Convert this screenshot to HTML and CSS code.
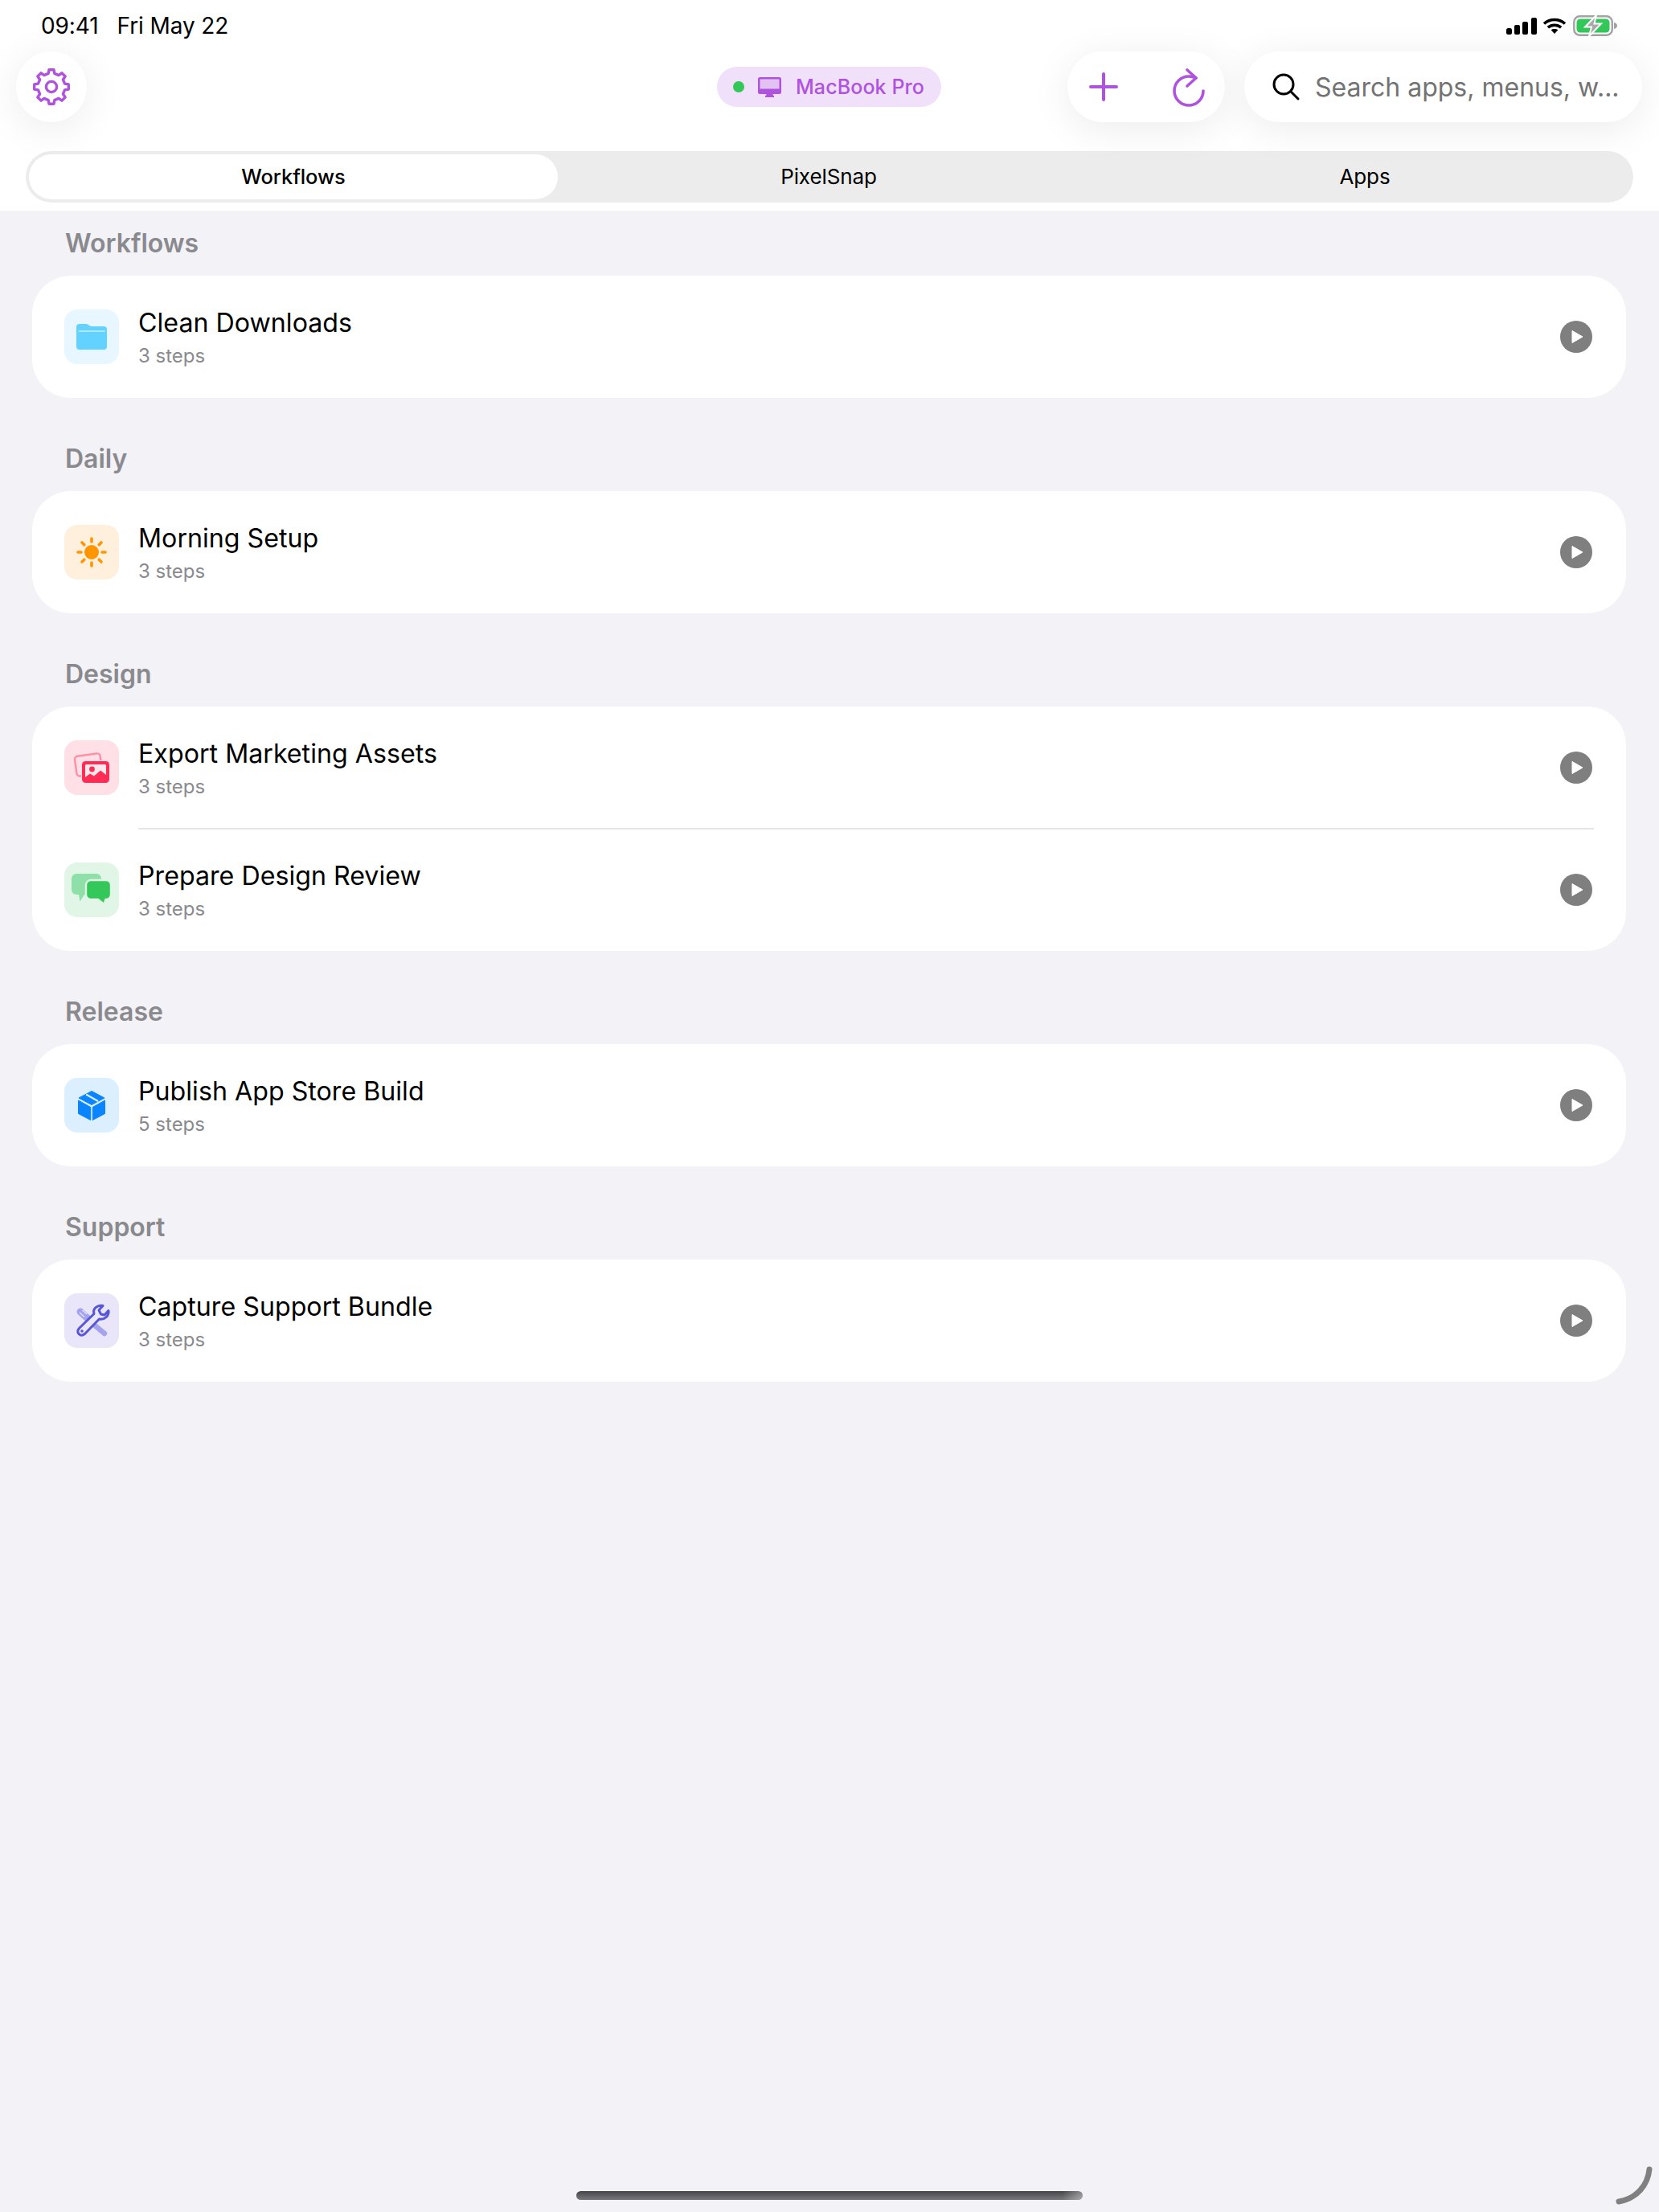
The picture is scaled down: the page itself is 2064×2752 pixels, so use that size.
FILE: index.html
```html
<!DOCTYPE html>
<html lang="en">
<head>
  <meta charset="UTF-8">
  <title>Workflows</title>
  <link rel="stylesheet" href="styles.css">
</head>
<body>

<header class="top">
  <div class="status">
    <div class="clock"><span>09:41</span><span>Fri May 22</span></div>
    <div class="status-icons">
      <svg class="ic-signal" width="38" height="21" viewBox="0 0 38 21">
        <rect x="0" y="13" width="7" height="8" rx="2.5"/>
        <rect x="10" y="9" width="7" height="12" rx="2"/>
        <rect x="20" y="5" width="7" height="16" rx="2"/>
        <rect x="31" y="0" width="7" height="21" rx="2"/>
      </svg>
      <svg class="ic-wifi" width="30" height="20" viewBox="0 0 30 20">
        <path d="M2 7.5C9.500 .8 20.500 .8 28 7.500M6.800 12.200C11.500 8.200 18.500 8.200 23.200 12.200" fill="none" stroke="#000" stroke-width="3.600"/>
        <path d="M10.600 15.300C13 13.500 17 13.500 19.400 15.300L15 20Z"/>
      </svg>
      <svg class="ic-battery" width="56" height="26" viewBox="0 0 56 26">
        <rect x="1.300" y="1.300" width="47.500" height="23.400" rx="7" fill="#fff" stroke="#a3a3a3" stroke-width="2.400"/>
        <rect x="4.500" y="4.500" width="41" height="17" rx="4.500" fill="#34c759"/>
        <path d="M51 9c2.500 .6 4 2 4 4s-1.500 3.400-4 4z" fill="#a3a3a3"/>
        <path d="M29 0L15 14.500H23L20 26L35 10.500H26.500Z" fill="#a9a9a9" stroke="#fff" stroke-width="2"/>
      </svg>
    </div>
  </div>

  <div class="toolbar">
    <div class="toolbar-left">
      <button class="round-btn">
        <svg width="48" height="48" viewBox="-24 -24 48 48" fill="none" stroke="#af52de" stroke-width="3.400" stroke-linejoin="round">
          <path d="M-2.990 -21.290L2.990 -21.290L3.820 -16.560L9.010 -14.420L12.940 -17.170L17.170 -12.940L14.420 -9.010L16.560 -3.820L21.290 -2.990L21.290 2.990L16.560 3.820L14.420 9.010L17.170 12.940L12.940 17.170L9.010 14.420L3.820 16.560L2.990 21.290L-2.990 21.290L-3.820 16.560L-9.010 14.420L-12.940 17.170L-17.170 12.940L-14.420 9.010L-16.560 3.820L-21.290 2.990L-21.290 -2.990L-16.560 -3.820L-14.420 -9.010L-17.170 -12.940L-12.940 -17.170L-9.010 -14.420L-3.820 -16.560Z"/>
          <circle r="6.600"/>
        </svg>
      </button>
    </div>

    <div class="device">
      <span class="device-dot"></span>
      <svg width="29" height="25" viewBox="0 0 29 25">
        <rect width="29" height="21" rx="2.500" fill="#af52de"/>
        <rect x="2.500" y="2.500" width="24" height="12" fill="#e2c2f3"/>
        <path d="M10.500 21H18.500L19 23H20V25H9V23H10Z" fill="#af52de"/>
      </svg>
      <span class="device-name">MacBook Pro</span>
    </div>

    <div class="toolbar-right">
      <div class="actions">
        <button class="action-btn">
          <svg width="40" height="40" viewBox="0 0 40 40" fill="none" stroke="#af52de" stroke-width="4" stroke-linecap="round">
            <path d="M20 4V36M4 20H36"/>
          </svg>
        </button>
        <button class="action-btn reload">
          <svg width="44" height="52" viewBox="0 0 44 52" fill="none" stroke="#af52de" stroke-width="3.600" stroke-linecap="round" stroke-linejoin="round">
            <path d="M31 13C28 11.700 25 11 22 11A18 18 0 1 0 40 29"/>
            <path d="M20 3L31 13L20 23"/>
          </svg>
        </button>
      </div>
      <div class="search">
        <svg width="36" height="36" viewBox="0 0 36 36" fill="none" stroke="#000" stroke-width="3" stroke-linecap="round">
          <circle cx="15" cy="15" r="12"/>
          <path d="M24 24L33 33"/>
        </svg>
        <span class="search-text">Search apps, menus, w...</span>
      </div>
    </div>
  </div>

  <nav class="tabs">
    <div class="tab active">Workflows</div>
    <div class="tab">PixelSnap</div>
    <div class="tab">Apps</div>
  </nav>
</header>

<main class="list">
  <section class="group">
    <h2>Workflows</h2>
    <div class="card">
      <div class="row">
        <div class="tile tile-blue">
          <svg width="68" height="68" viewBox="0 0 68 68">
            <path d="M15 22a4 4 0 0 1 4-4h8c3 0 4 3 7 3h15a4 4 0 0 1 4 4v21a4 4 0 0 1-4 4H19a4 4 0 0 1-4-4z" fill="#64d2ff"/>
            <path d="M18.500 27H50" stroke="#c9f0ff" stroke-width="1.600" stroke-linecap="round"/>
          </svg>
        </div>
        <div class="row-text">
          <div class="row-title">Clean Downloads</div>
          <div class="row-sub">3 steps</div>
        </div>
        <svg class="play" width="40" height="40" viewBox="0 0 40 40"><circle cx="20" cy="20" r="20" fill="#7f7f7f"/><path d="M15 12.500L28 20L15 27.500Z" fill="#fff" stroke="#fff" stroke-width="1" stroke-linejoin="round"/></svg>
      </div>
    </div>
  </section>

  <section class="group">
    <h2>Daily</h2>
    <div class="card">
      <div class="row">
        <div class="tile tile-orange">
          <svg width="68" height="68" viewBox="0 0 68 68">
            <circle cx="34" cy="34" r="9" fill="#ff9500"/>
            <path d="M34 17V21M34 47V51M17 34H21M47 34H51M22 22L24.800 24.800M43.200 43.200L46 46M22 46L24.800 43.200M43.200 24.800L46 22" stroke="#ff9500" stroke-width="3.600" stroke-linecap="round"/>
          </svg>
        </div>
        <div class="row-text">
          <div class="row-title">Morning Setup</div>
          <div class="row-sub">3 steps</div>
        </div>
        <svg class="play" width="40" height="40" viewBox="0 0 40 40"><circle cx="20" cy="20" r="20" fill="#7f7f7f"/><path d="M15 12.500L28 20L15 27.500Z" fill="#fff" stroke="#fff" stroke-width="1" stroke-linejoin="round"/></svg>
      </div>
    </div>
  </section>

  <section class="group">
    <h2>Design</h2>
    <div class="card">
      <div class="row">
        <div class="tile tile-pink">
          <svg width="68" height="68" viewBox="0 0 68 68">
            <rect x="14" y="18" width="32" height="25" rx="4" transform="rotate(-8 30 30)" fill="none" stroke="#ff8fa5" stroke-width="2.400"/>
            <rect x="21" y="25" width="36" height="29" rx="5" fill="#ffe0e6"/>
            <rect x="22" y="26" width="34" height="27" rx="4.500" fill="#ff2d55"/>
            <rect x="26" y="30" width="26" height="19" rx="1.500" fill="#ffe9ed"/>
            <circle cx="34.500" cy="36" r="3.400" fill="#ff2d55"/>
            <path d="M26 46L32 41.500L37 44.500L45 37.500L52 43V50H26Z" fill="#ff2d55"/>
          </svg>
        </div>
        <div class="row-text">
          <div class="row-title">Export Marketing Assets</div>
          <div class="row-sub">3 steps</div>
        </div>
        <svg class="play" width="40" height="40" viewBox="0 0 40 40"><circle cx="20" cy="20" r="20" fill="#7f7f7f"/><path d="M15 12.500L28 20L15 27.500Z" fill="#fff" stroke="#fff" stroke-width="1" stroke-linejoin="round"/></svg>
      </div>
      <div class="row">
        <div class="tile tile-green">
          <svg width="68" height="68" viewBox="0 0 68 68">
            <path d="M15 14H40a6 6 0 0 1 6 6V34a6 6 0 0 1-6 6H25L19.500 48.500L18 40H15a6 6 0 0 1-6-6V20a6 6 0 0 1 6-6Z" fill="#8fe0a8"/>
            <path d="M33 22H52a6 6 0 0 1 6 6V40a6 6 0 0 1-6 6H51.500L49.500 52L42 46H33a6 6 0 0 1-6-6V28a6 6 0 0 1 6-6Z" fill="#34c759" stroke="#e2f6e8" stroke-width="2.400"/>
          </svg>
        </div>
        <div class="row-text">
          <div class="row-title">Prepare Design Review</div>
          <div class="row-sub">3 steps</div>
        </div>
        <svg class="play" width="40" height="40" viewBox="0 0 40 40"><circle cx="20" cy="20" r="20" fill="#7f7f7f"/><path d="M15 12.500L28 20L15 27.500Z" fill="#fff" stroke="#fff" stroke-width="1" stroke-linejoin="round"/></svg>
      </div>
    </div>
  </section>

  <section class="group">
    <h2>Release</h2>
    <div class="card">
      <div class="row">
        <div class="tile tile-sky">
          <svg width="68" height="68" viewBox="0 0 68 68">
            <g fill="#0a84ff" stroke="#0a84ff" stroke-width="1" stroke-linejoin="round">
              <path d="M34 16.500L50 25L34 33.500L18 25Z"/>
              <path d="M17.500 28L32.700 36.500V52.500L17.500 44.500Z"/>
              <path d="M35.300 36.500L50.500 28V44.500L35.300 52.500Z"/>
            </g>
            <path d="M27 20.500L42 29" stroke="#dcefff" stroke-width="2.200"/>
          </svg>
        </div>
        <div class="row-text">
          <div class="row-title">Publish App Store Build</div>
          <div class="row-sub">5 steps</div>
        </div>
        <svg class="play" width="40" height="40" viewBox="0 0 40 40"><circle cx="20" cy="20" r="20" fill="#7f7f7f"/><path d="M15 12.500L28 20L15 27.500Z" fill="#fff" stroke="#fff" stroke-width="1" stroke-linejoin="round"/></svg>
      </div>
    </div>
  </section>

  <section class="group">
    <h2>Support</h2>
    <div class="card">
      <div class="row">
        <div class="tile tile-indigo">
          <svg width="68" height="68" viewBox="0 0 68 68">
            <path d="M20 23L31 33" stroke="#a5a3ee" stroke-width="9" stroke-linecap="round"/>
            <path d="M19 24L25 29.500M22.500 21L28 26" stroke="#e8e6f8" stroke-width="1.200"/>
            <path d="M38 40L50 50" stroke="#a5a3ee" stroke-width="6.500" stroke-linecap="round"/>
            <path d="M48 15.500L43 21L45.500 26L50 27L55 21.500C56 28 50 33.500 43.500 32L25.500 50.500C20 55 14 49 18.500 43.500L37 25.500C35 19 41 14.500 48 15.500Z" fill="#e8e6f8" stroke="#5856d6" stroke-width="3" stroke-linejoin="round"/>
            <circle cx="22" cy="47" r="1.800" fill="#5856d6"/>
          </svg>
        </div>
        <div class="row-text">
          <div class="row-title">Capture Support Bundle</div>
          <div class="row-sub">3 steps</div>
        </div>
        <svg class="play" width="40" height="40" viewBox="0 0 40 40"><circle cx="20" cy="20" r="20" fill="#7f7f7f"/><path d="M15 12.500L28 20L15 27.500Z" fill="#fff" stroke="#fff" stroke-width="1" stroke-linejoin="round"/></svg>
      </div>
    </div>
  </section>
</main>

<div class="home-bar"></div>
<svg class="corner" width="50" height="50" viewBox="0 0 50 50">
  <path d="M45 5C43 24 30 41 7 45" fill="none" stroke="#808080" stroke-width="7" stroke-linecap="round"/>
</svg>

</body>
</html>
```

FILE: styles.css
```css
html, body {
  margin: 0;
  padding: 0;
}
body {
  position: relative;
  width: 2064px;
  height: 2752px;
  overflow: hidden;
  display: flex;
  flex-direction: column;
  font-family: Inter, "Noto Sans", sans-serif;
  background-color: #f2f2f7;
  color: #000;
}
button {
  border: none;
  padding: 0;
  background: none;
}

/* header */
.top {
  background-color: #fff;
  height: 262px;
  flex: none;
}
.status {
  height: 64px;
  padding: 0 51px 0 51px;
  display: flex;
  align-items: center;
  justify-content: space-between;
}
.clock {
  display: flex;
  gap: 23px;
  font-size: 28px;
  letter-spacing: -0.1px;
}
.status-icons {
  display: flex;
  align-items: center;
  gap: 7px;
}
.ic-battery {
  margin-left: 1px;
}
.toolbar {
  display: grid;
  grid-template-columns: 1fr auto 1fr;
  align-items: center;
  height: 88px;
  padding: 0 21px 0 20px;
}
.round-btn {
  width: 88px;
  height: 88px;
  border-radius: 50%;
  background-color: #fff;
  box-shadow: 0 8px 50px rgba(0, 0, 0, 0.08);
  display: flex;
  align-items: center;
  justify-content: center;
}
.device {
  display: flex;
  align-items: center;
  height: 50px;
  padding: 0 21px 0 20px;
  border-radius: 25px;
  background-color: #f0e0f9;
  color: #af52de;
}
.device-dot {
  width: 14px;
  height: 14px;
  border-radius: 50%;
  background-color: #34c759;
  margin-right: 17px;
}
.device-name {
  margin-left: 18px;
  font-size: 25px;
  letter-spacing: 0.1px;
  font-weight: 500;
}
.toolbar-right {
  display: flex;
  justify-content: flex-end;
  gap: 24px;
}
.actions {
  width: 196px;
  height: 88px;
  box-sizing: border-box;
  padding: 0 23px 0 25px;
  border-radius: 44px;
  background-color: #fff;
  box-shadow: 0 8px 50px rgba(0, 0, 0, 0.08);
  display: flex;
  align-items: center;
  justify-content: space-between;
}
.action-btn {
  display: flex;
  align-items: center;
  justify-content: center;
  height: 88px;
}
.reload svg {
  margin-top: 4px;
}
.search {
  width: 495px;
  height: 88px;
  box-sizing: border-box;
  padding: 0 0 0 34px;
  border-radius: 44px;
  background-color: #fff;
  box-shadow: 0 8px 50px rgba(0, 0, 0, 0.08);
  display: flex;
  align-items: center;
  gap: 18px;
}
.search svg {
  flex: none;
}
.search-text {
  font-size: 32px;
  color: #737373;
  white-space: nowrap;
}

/* tabs */
.tabs {
  margin: 36px 32px 0 32px;
  height: 64px;
  box-sizing: border-box;
  padding: 4px;
  border-radius: 32px;
  background-color: rgba(120, 120, 128, 0.14);
  display: grid;
  grid-template-columns: 658px 674px 1fr;
}
.tab {
  display: flex;
  align-items: center;
  justify-content: center;
  padding-bottom: 2px;
  font-size: 26px;
  letter-spacing: -0.1px;
}
.tab.active {
  background-color: #fff;
  border-radius: 28px;
  font-size: 25.5px;
  font-weight: 500;
}

/* list */
.list {
  flex: 1;
  padding: 20px 41px 0 40px;
}
.group {
  margin-bottom: 55px;
}
.group h2 {
  margin: 0 0 19px 0;
  padding-left: 41px;
  height: 42px;
  font-size: 32px;
  line-height: 42px;
  font-weight: 600;
  color: #8a8a8e;
}
.card {
  background-color: #fff;
  border-radius: 48px;
  overflow: hidden;
}
.row {
  position: relative;
  display: flex;
  align-items: center;
  height: 152px;
  box-sizing: border-box;
  padding: 0 42px 0 40px;
}
.row + .row::before {
  content: "";
  position: absolute;
  left: 132px;
  right: 40px;
  top: -1px;
  height: 2px;
  background-color: #e5e5e7;
}
.tile {
  width: 68px;
  height: 68px;
  border-radius: 16px;
  margin-right: 24px;
  flex: none;
}
.tile svg {
  display: block;
}
.tile-blue { background-color: #e8f7ff; }
.tile-orange { background-color: #fff0de; }
.tile-pink { background-color: #ffe0e6; }
.tile-green { background-color: #e2f6e8; }
.tile-sky { background-color: #dcefff; }
.tile-indigo { background-color: #e8e6f8; }
.row-text {
  flex: 1;
}
.row-title {
  font-size: 32.2px;
  line-height: 44px;
}
.row-sub {
  margin-top: 4px;
  font-size: 24px;
  line-height: 30px;
  color: #8a8a8e;
}
.play {
  flex: none;
}

/* overlays */
.home-bar {
  position: absolute;
  left: 717px;
  top: 2726px;
  width: 630px;
  height: 11px;
  border-radius: 6px;
  background: linear-gradient(to right, rgba(242, 242, 247, 0) 96%, rgba(242, 242, 247, 0.4)), linear-gradient(#454547, #7a7a7c);
}
.corner {
  position: absolute;
  left: 2007px;
  top: 2694px;
}
```
